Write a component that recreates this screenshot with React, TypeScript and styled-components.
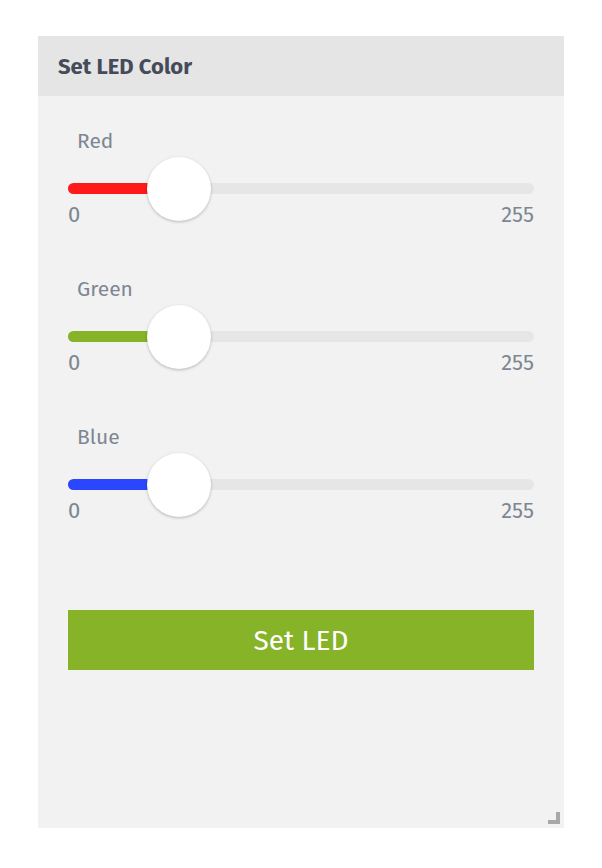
import React from "react";
import styled, { createGlobalStyle } from "styled-components";

const Global = createGlobalStyle`
  html, body { margin: 0; padding: 0; background: #ffffff; }
  body { font-family: "Fira Sans", "Open Sans", "Noto Sans", sans-serif; }
`;

const Panel = styled.div`
  position: relative;
  margin: 36px 0 0 38px;
  width: 526px;
  height: 792px;
  background: #f2f2f2;
  display: flex;
  flex-direction: column;
`;

const Header = styled.div`
  height: 60px;
  background: #e5e5e5;
  display: flex;
  align-items: center;
  padding-left: 20px;
  font-weight: 700;
  font-size: 22px;
  color: #454b58;
`;

const Body = styled.div`
  padding: 34px 30px 0 30px;
  display: flex;
  flex-direction: column;
`;

const Group = styled.div`
  display: flex;
  flex-direction: column;
  margin-bottom: 53px;
`;

const Label = styled.div`
  font-size: 21px;
  font-weight: 400;
  line-height: 22px;
  color: #7e8791;
  padding-left: 9px;
`;

const Track = styled.div`
  position: relative;
  margin-top: 31px;
  height: 11px;
  border-radius: 6px;
  background: #e6e6e6;
`;

const Fill = styled.div<{ $color: string }>`
  position: absolute;
  left: 0;
  top: 0;
  bottom: 0;
  border-radius: 6px 0 0 6px;
  background: ${(p) => p.$color};
`;

const Thumb = styled.div`
  position: absolute;
  top: 50%;
  width: 64px;
  height: 64px;
  margin-left: -32px;
  margin-top: -32px;
  border-radius: 50%;
  background: #ffffff;
  box-shadow: 0 1px 3px rgba(0, 0, 0, 0.25);
`;

const Range = styled.div`
  display: flex;
  justify-content: space-between;
  margin-top: 11px;
  font-size: 22px;
  font-weight: 400;
  line-height: 20px;
  color: #7e8791;
`;

const Button = styled.button`
  margin-top: 36px;
  height: 60px;
  border: none;
  background: #86b327;
  color: #ffffff;
  font-family: inherit;
  font-size: 28px;
  font-weight: 400;
  cursor: pointer;
`;

const Grip = styled.div`
  position: absolute;
  right: 4px;
  bottom: 4px;
  width: 12px;
  height: 12px;
  &::before, &::after {
    content: "";
    position: absolute;
    background: #a8a8a8;
  }
  &::before { right: 0; bottom: 0; width: 4px; height: 12px; }
  &::after { right: 0; bottom: 0; width: 12px; height: 4px; }
`;

const sliders = [
  { name: "Red", color: "#ff1a1a", value: 50 },
  { name: "Green", color: "#86b327", value: 50 },
  { name: "Blue", color: "#2a47ff", value: 50 },
];

export default function App() {
  const trackW = 466;
  return (
    <>
      <Global />
      <Panel>
        <Header>Set LED Color</Header>
        <Body>
          {sliders.map((s) => {
            const pos = 32 + ((trackW - 64) * s.value) / 255;
            return (
              <Group key={s.name}>
                <Label>{s.name}</Label>
                <Track>
                  <Fill $color={s.color} style={{ width: pos }} />
                  <Thumb style={{ left: pos }} />
                </Track>
                <Range>
                  <span>0</span>
                  <span>255</span>
                </Range>
              </Group>
            );
          })}
          <Button>Set LED</Button>
        </Body>
        <Grip />
      </Panel>
    </>
  );
}
